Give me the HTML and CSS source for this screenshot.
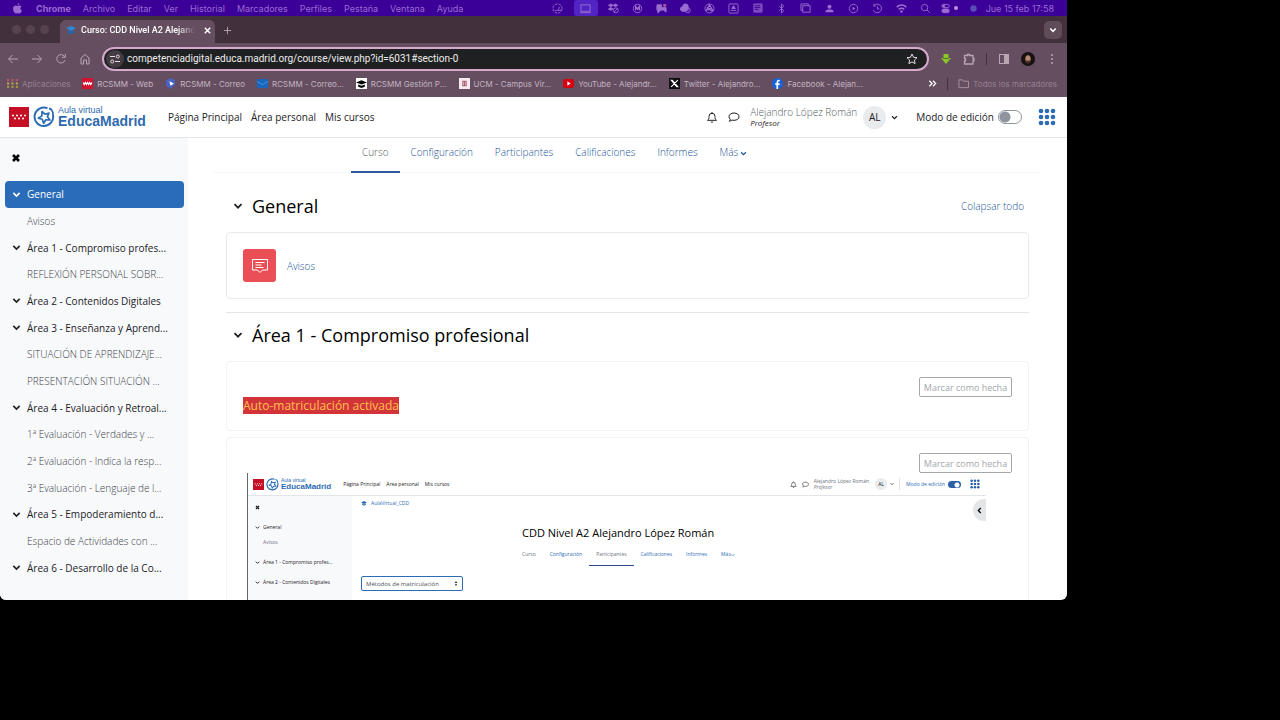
FILE: index.html
```html
<!DOCTYPE html>
<html lang="es">
<head>
    <meta charset="UTF-8">
    <meta name="viewport" content="width=device-width, initial-scale=1.0">
    <title>Curso: CDD Nivel A2 Alejandro López Román</title>
    <link rel="stylesheet" href="styles.css">
</head>
<body>

<!-- Shared icons -->
<svg class="sprite" aria-hidden="true">
    <symbol id="chevron" viewBox="0 0 10 10"><path d="M1.5 3.2 5 6.7 8.5 3.2" fill="none" stroke="currentColor" stroke-width="1.8"/></symbol>
    <symbol id="cross" viewBox="0 0 10 10"><path d="M2 2 8 8M8 2 2 8" fill="none" stroke="currentColor" stroke-width="2.6"/></symbol>
    <symbol id="bell" viewBox="0 0 12 12"><path d="M1.5 9.3c1.3-1 1.5-2 1.5-4a3 3 0 0 1 6 0c0 2 .2 3 1.500 4zM6 1v1.300M4.800 10.500a1.300 1 0 0 0 2.400 0" fill="none" stroke="currentColor"/></symbol>
    <symbol id="chat" viewBox="0 0 12 12"><path d="M6 2c3 0 5 1.500 5 3.700S9 9.300 6 9.300c-.8 0-1.400-.1-2-.3-.8.7-1.600 1.100-2.700 1.200.6-.7.9-1.300 1-2C1.400 7.500 1 6.700 1 5.700 1 3.500 3 2 6 2z" fill="none" stroke="currentColor"/></symbol>
    <symbol id="grid" viewBox="0 0 18 18"><g fill="currentColor"><circle cx="3" cy="3" r="2.300"/><circle cx="9" cy="3" r="2.300"/><circle cx="15" cy="3" r="2.300"/><circle cx="3" cy="9" r="2.300"/><circle cx="9" cy="9" r="2.300"/><circle cx="15" cy="9" r="2.300"/><circle cx="3" cy="15" r="2.300"/><circle cx="9" cy="15" r="2.300"/><circle cx="15" cy="15" r="2.300"/></g></symbol>
    <symbol id="flag" viewBox="0 0 20 20"><rect width="20" height="20" fill="#c40f24"/><g fill="#fff"><circle cx="4" cy="8.500" r="1"/><circle cx="8" cy="8.500" r="1"/><circle cx="12" cy="8.500" r="1"/><circle cx="16" cy="8.500" r="1"/><circle cx="6" cy="11.500" r="1"/><circle cx="10" cy="11.500" r="1"/><circle cx="14" cy="11.500" r="1"/></g></symbol>
    <symbol id="educa" viewBox="0 0 22 22"><g fill="none" stroke="#2b6cb5"><path d="M14.500 2.200A9.300 9.300 0 1 0 20 9" stroke-width="2"/><path d="m9 5.500 3 2.700 4-1.200-1.600 3.800 2.600 3.200-4.200-.2-2.200 3.500-1.300-4-4-1 3.500-2.400z" stroke-width="1.700" stroke-linejoin="round"/><path d="M16 2.500c2.500.5 4.500 3 3.800 6.500" stroke-width="1.800"/></g></symbol>
</svg>

<div class="screen">

    <!-- System menu bar -->
    <div class="menubar">
        <svg class="apple" viewBox="0 0 12 12"><path d="M8.200 0c.1 1.200-.9 2.400-2.100 2.400C6 1.200 7 .2 8.200 0zM6.200 3.200c.6 0 1.200-.5 2.100-.5.8 0 1.600.4 2.100 1.100-1.900 1.100-1.500 3.700.4 4.400C10.200 10 9.200 11.500 8.200 11.500c-.8 0-1-.4-1.900-.4s-1.200.4-1.900.4C2.900 11.500 1.200 8.600 1.200 6.300c0-2.200 1.400-3.500 2.800-3.500.9 0 1.600.4 2.200.4z" fill="currentColor"/></svg>
        <nav class="menus" aria-label="Menú">
            <b>Chrome</b><span>Archivo</span><span>Editar</span><span>Ver</span><span>Historial</span><span>Marcadores</span><span>Perfiles</span><span>Pestaña</span><span>Ventana</span><span>Ayuda</span>
        </nav>
        <div class="status">
            <span><svg viewBox="0 0 12 12"><circle cx="6" cy="6" r="5" stroke-dasharray="3 1"/><path d="M3 8c3 1 5-1 5-4M6 8h4"/></svg></span>
            <span class="on"><svg viewBox="0 0 12 12"><rect x="1" y="2" width="10" height="7"/><path d="M0 10.500h12"/></svg></span>
            <span><svg viewBox="0 0 12 12"><path d="m3 1 2.500 1.500L3 4 .5 2.500zM8 1l2.500 1.500L8 4 5.500 2.500zM3 5l2.500 1.500L3 8 .5 6.500z" fill="currentColor"/><circle cx="8.500" cy="8" r="2.700"/><path d="m6.500 10 4-4"/></svg></span>
            <span><svg viewBox="0 0 12 12"><circle cx="6" cy="6" r="4.600"/><path d="M4 8V4l2 2.500L8 4v4" stroke-width="1.600"/></svg></span>
            <span><svg viewBox="0 0 12 12"><path d="M1 2h5v3h5v5L8 7.500 5 8l-3 3V8H1z" fill="currentColor"/><circle cx="9.500" cy="2.500" r="1.800" fill="#b04d96" stroke="none"/></svg></span>
            <span><svg viewBox="0 0 12 12"><path d="M1 8a2.500 2.500 0 0 1 2-4 3 3 0 0 1 6 0v2L6 9H2z" fill="currentColor"/><circle cx="8.500" cy="8" r="2.700"/><path d="m7.500 7 2 2m0-2-2 2"/></svg></span>
            <span><svg viewBox="0 0 12 12"><circle cx="6" cy="6" r="4.900"/><path d="M2 9 6 2l4 7M4 8l4-3M3 5l6 4" stroke-width="1.400"/></svg></span>
            <span><svg viewBox="0 0 12 12"><rect x="1" y="1" width="10" height="10" rx="1"/><path d="m6 3 2 3H4zM3 8h6" fill="currentColor"/></svg></span>
            <span><svg viewBox="0 0 12 12"><path d="M2 1h9v9H2z" fill="currentColor" opacity=".7"/><path d="M3 3h6M3 5h6M3 7h4" stroke="#3a0098"/></svg></span>
            <span><svg viewBox="0 0 12 12"><path d="m3.500 3.500 5 5L6 11V1l2.500 2.500-5 5"/></svg></span>
            <span><svg viewBox="0 0 12 12"><path d="M3 8H1V1h8v2"/><rect x="3" y="3" width="8" height="7"/></svg></span>
            <span><svg viewBox="0 0 12 12"><circle cx="6" cy="4" r="2.200" fill="currentColor" stroke="none"/><path d="M1.500 10c0-2.500 2-3 4.500-3s4.500.5 4.500 3z" fill="currentColor" stroke="none"/></svg></span>
            <span><svg viewBox="0 0 12 12"><circle cx="6" cy="6" r="4.600"/><path d="m5 4 3 2-3 2z" fill="currentColor" stroke="none"/></svg></span>
            <span><svg viewBox="0 0 12 12"><path d="M2 3a4.700 4.700 0 1 1-.5 5M2 1v2.500h2M6 3.500V6.500h2"/></svg></span>
            <span><svg viewBox="0 0 12 12"><path d="M.8 4.500c3-3 7.400-3 10.400 0M3 7c2-1.700 4-1.700 6 0" stroke-width="1.600"/><circle cx="6" cy="9.300" r="1.300" fill="currentColor" stroke="none"/></svg></span>
            <span><svg viewBox="0 0 12 12"><circle cx="5" cy="5" r="3.500"/><path d="m7.500 7.500 3 3"/></svg></span>
            <span><svg viewBox="0 0 12 12"><rect x="1" y="1.500" width="8" height="3.500" rx="1.700"/><circle cx="3" cy="3.200" r="1.200" fill="currentColor"/><rect x="1" y="6.500" width="8" height="4" rx="2" fill="currentColor"/></svg><i></i></span>
            <span><svg viewBox="0 0 12 12"><circle cx="6" cy="6" r="3.500" fill="#5a4dba" stroke="none"/></svg></span>
        </div>
        <time>Jue 15 feb 17:58</time>
    </div>

    <!-- Browser window -->
    <div class="tabstrip">
        <div class="lights"><i></i><i></i><i></i></div>
        <div class="tab">
            <svg class="favicon" viewBox="0 0 10 10"><path d="M0 3 5 1l5 2-5 3z" fill="#2f86d6"/><path d="M2 5v3c2 1 4 1 6 0V5L5 6.500z" fill="#1f68b4"/></svg>
            <span class="tab-title">Curso: CDD Nivel A2 Alejand</span>
            <button aria-label="Cerrar pestaña"><svg viewBox="0 0 10 10"><path d="m2 2 6 6M8 2 2 8" fill="none" stroke="#fff" stroke-width="1.600"/></svg></button>
        </div>
        <button class="new-tab" aria-label="Nueva pestaña"><svg viewBox="0 0 10 10"><path d="M5 1v8M1 5h8" fill="none" stroke="currentColor"/></svg></button>
        <button class="tab-search" aria-label="Buscar pestañas"><svg><use href="#chevron"/></svg></button>
    </div>

    <div class="toolbar">
        <div class="nav-buttons">
            <button aria-label="Atrás"><svg viewBox="0 0 12 12"><path d="M11 6H2M5.500 2 1.500 6l4 4"/></svg></button>
            <button aria-label="Adelante"><svg viewBox="0 0 12 12"><path d="M1 6h9M6.500 2l4 4-4 4"/></svg></button>
            <button aria-label="Recargar"><svg viewBox="0 0 12 12"><path d="M9.500 3.500A4.200 4.200 0 1 0 10 7M10.300 1v3.300H7"/></svg></button>
            <button aria-label="Inicio"><svg viewBox="0 0 12 12"><path d="M2 11V5l4-3.500L10 5v6H7.500V7h-3v4z"/></svg></button>
        </div>
        <div class="omnibox">
            <span class="site-info"><svg viewBox="0 0 12 12"><path d="M1 3.500h5M6 8.500h5"/><circle cx="8.800" cy="3.500" r="1.500"/><circle cx="3.200" cy="8.500" r="1.500"/></svg></span>
            <input type="text" aria-label="Dirección" value="competenciadigital.educa.madrid.org/course/view.php?id=6031#section-0">
            <button aria-label="Añadir a marcadores"><svg viewBox="0 0 12 12"><path d="m6 1 1.500 3.300 3.500.4-2.600 2.400.7 3.500L6 8.900l-3.100 1.700.7-3.500L1 4.700l3.500-.4z"/></svg></button>
        </div>
        <div class="extensions">
            <svg viewBox="0 0 12 12"><path d="M3.500 1h5v4H11L6 11 1 5h2.500z" fill="#8fc62b" stroke="none"/><path d="M3 5.500h6" stroke="#4e7a26"/></svg>
            <svg viewBox="0 0 12 12"><path d="M1.500 2.500H4.500V1.500h2v1H10V5.500h1v2h-1V11H1.500V8h1V5.500h-1z" stroke-width="1.300"/></svg>
            <i class="sep"></i>
            <svg viewBox="0 0 12 12"><rect x="1.500" y="1.500" width="9" height="9"/><path d="M6.500 1.500h4v9h-4z" fill="currentColor"/></svg>
            <svg class="avatar" viewBox="0 0 14 14"><circle cx="7" cy="7" r="7" fill="#171113" stroke="none"/><ellipse cx="7" cy="7" rx="2.700" ry="3.700" fill="#b7896f" stroke="none"/><path d="M4.500 8c1 1 4 1 5 0v2c-1 2-4 2-5 0z" fill="#4a2e27" stroke="none"/></svg>
            <svg viewBox="0 0 12 12"><g fill="currentColor" stroke="none"><circle cx="6" cy="2" r="1"/><circle cx="6" cy="6" r="1"/><circle cx="6" cy="10" r="1"/></g></svg>
        </div>
    </div>

    <div class="bookmarks">
        <nav class="bookmark-list" aria-label="Marcadores">
            <a href="#" class="dim"><svg viewBox="0 0 10 10"><path d="M0 1h2v2H0zM4 1h2v2H4zM8 1h2v2H8z" fill="#b3566a"/><path d="M0 4h2v2H0zM4 4h2v2H4zM8 4h2v2H8z" fill="#b9a94e"/><path d="M0 7h2v2H0zM4 7h2v2H4zM8 7h2v2H8z" fill="#a0933c"/></svg>Aplicaciones</a>
            <a href="#"><svg viewBox="0 0 10 10"><rect width="10" height="10" fill="#d3122f"/><path d="m1 4 1 2 1-2 1 2 1-2 1 2 1-2 1 2 1-2" fill="none" stroke="#fff"/></svg>RCSMM - Web</a>
            <a href="#"><svg viewBox="0 0 10 10"><path d="m5 0 4 2v4L5 10 1 7V2z" fill="#4964c4"/><path d="m4 3 4 2-3 2z" fill="#fff"/></svg>RCSMM - Correo</a>
            <a href="#"><svg viewBox="0 0 10 10"><rect y="1" width="10" height="8" rx="1" fill="#1767bd"/><path d="m0 3 5 3 5-3" fill="none" stroke="#388bdb"/></svg>RCSMM - Correo...</a>
            <a href="#"><svg viewBox="0 0 10 10"><rect width="10" height="10" fill="#fff"/><path d="m0 4 5-2 5 2-5 2zM2 6l3 1 3-1v2L5 9 2 8z"/></svg>RCSMM Gestión P...</a>
            <a href="#"><svg viewBox="0 0 10 10"><rect width="10" height="10" fill="#f7e9ee"/><path d="M3.500 3h3v4h-3zM5 3v4" fill="none" stroke="#a65e73"/></svg>UCM - Campus Vir...</a>
            <a href="#"><svg viewBox="0 0 10 10"><rect y="1" width="10" height="8" rx="2" fill="#d70012"/><path d="m4 3 3 2-3 2z" fill="#fff"/></svg>YouTube - Alejandr...</a>
            <a href="#"><svg viewBox="0 0 10 10"><rect width="10" height="10" fill="#0d0c0f"/><path d="m2 2 5 6h1L3 2zM8 2 2 8" fill="none" stroke="#fff"/></svg>Twitter - Alejandro...</a>
            <a href="#"><svg viewBox="0 0 10 10"><circle cx="5" cy="5" r="5" fill="#1763da"/><path d="M7 2.500C5 2 4.800 3.500 4.800 4.500V10M3 5.500h4" fill="none" stroke="#fff" stroke-width="1.500"/></svg>Facebook - Alejan...</a>
        </nav>
        <button class="more" aria-label="Más marcadores"><svg viewBox="0 0 10 10"><path d="m1.500 2 3 3-3 3M5.500 2l3 3-3 3" fill="none" stroke="#fff" stroke-width="1.400"/></svg></button>
        <i class="sep"></i>
        <a href="#" class="dim all"><svg viewBox="0 0 12 12"><path d="M1 2h4l1 1.500h5.500v7H1z" fill="none" stroke="#a897a5"/></svg>Todos los marcadores</a>
    </div>

    <!-- Virtual classroom -->
    <header class="site-header">
        <a href="#" class="brand" aria-label="EducaMadrid">
            <svg class="flag"><use href="#flag"/></svg>
            <svg class="educa"><use href="#educa"/></svg>
            <span class="brand-text"><small>Aula virtual</small><strong>EducaMadrid</strong></span>
        </a>
        <nav class="primary" aria-label="Principal">
            <a href="#">Página Principal</a>
            <a href="#">Área personal</a>
            <a href="#">Mis cursos</a>
        </nav>
        <div class="user">
            <svg class="icon"><use href="#bell"/></svg>
            <svg class="icon"><use href="#chat"/></svg>
            <div class="user-name"><span>Alejandro López Román</span><em>Profesor</em></div>
            <span class="initials">AL</span>
            <svg class="caret"><use href="#chevron"/></svg>
            <label class="edit-mode">Modo de edición <input type="checkbox"></label>
            <svg class="apps"><use href="#grid"/></svg>
        </div>
    </header>

    <div class="page">
        <aside class="drawer">
            <button class="close" aria-label="Cerrar índice"><svg><use href="#cross"/></svg></button>
            <ul class="index">
                <li class="section active"><svg><use href="#chevron"/></svg><a href="#">General</a></li>
                <li><a href="#">Avisos</a></li>
                <li class="section"><svg><use href="#chevron"/></svg><a href="#">Área 1 - Compromiso profes...</a></li>
                <li><a href="#">REFLEXIÓN PERSONAL SOBR...</a></li>
                <li class="section"><svg><use href="#chevron"/></svg><a href="#">Área 2 - Contenidos Digitales</a></li>
                <li class="section"><svg><use href="#chevron"/></svg><a href="#">Área 3 - Enseñanza y Aprend...</a></li>
                <li><a href="#">SITUACIÓN DE APRENDIZAJE...</a></li>
                <li><a href="#">PRESENTACIÓN SITUACIÓN ...</a></li>
                <li class="section"><svg><use href="#chevron"/></svg><a href="#">Área 4 - Evaluación y Retroal...</a></li>
                <li><a href="#">1ª Evaluación - Verdades y ...</a></li>
                <li><a href="#">2ª Evaluación - Indica la resp...</a></li>
                <li><a href="#">3ª Evaluación - Lenguaje de l...</a></li>
                <li class="section"><svg><use href="#chevron"/></svg><a href="#">Área 5 - Empoderamiento d...</a></li>
                <li><a href="#">Espacio de Actividades con ...</a></li>
                <li class="section"><svg><use href="#chevron"/></svg><a href="#">Área 6 - Desarrollo de la Co...</a></li>
            </ul>
        </aside>

        <main>
            <nav class="secondary" aria-label="Curso">
                <a href="#" class="current">Curso</a>
                <a href="#">Configuración</a>
                <a href="#">Participantes</a>
                <a href="#">Calificaciones</a>
                <a href="#">Informes</a>
                <a href="#">Más <svg><use href="#chevron"/></svg></a>
            </nav>

            <section class="course-section">
                <div class="section-head">
                    <svg><use href="#chevron"/></svg>
                    <h2>General</h2>
                    <a href="#">Colapsar todo</a>
                </div>
                <div class="card forum">
                    <span class="activity-icon"><svg viewBox="0 0 18 18"><path d="M1.500 2.500h15v10.500h-5L9 15.500 6.500 13h-5z"/><path d="M4.500 5.500h9M4.500 8h6M4.500 10.500h8"/></svg></span>
                    <a href="#">Avisos</a>
                </div>
            </section>

            <section class="course-section">
                <div class="section-head">
                    <svg><use href="#chevron"/></svg>
                    <h2>Área 1 - Compromiso profesional</h2>
                </div>
                <div class="card notice">
                    <button class="done">Marcar como hecha</button>
                    <p><mark>Auto-matriculación activada</mark></p>
                </div>
                <div class="card tutorial">
                    <button class="done">Marcar como hecha</button>

                    <div class="capture">
                        <div class="cap-header">
                            <svg class="cap-flag"><use href="#flag"/></svg>
                            <svg class="cap-educa"><use href="#educa"/></svg>
                            <span class="cap-brand"><small>Aula virtual</small><strong>EducaMadrid</strong></span>
                            <span class="cap-primary"><span>Página Principal</span><span>Área personal</span><span>Mis cursos</span></span>
                            <span class="cap-user">
                                <svg><use href="#bell"/></svg>
                                <svg><use href="#chat"/></svg>
                                <span class="cap-name"><span>Alejandro López Román</span><em>Profesor</em></span>
                                <span class="cap-initials">AL</span>
                                <svg class="cap-caret"><use href="#chevron"/></svg>
                                <label class="cap-edit">Modo de edición <input type="checkbox" checked></label>
                                <svg class="cap-apps"><use href="#grid"/></svg>
                            </span>
                        </div>
                        <div class="cap-page">
                            <div class="cap-drawer">
                                <svg class="cap-close"><use href="#cross"/></svg>
                                <span><svg><use href="#chevron"/></svg>General</span>
                                <span class="sub">Avisos</span>
                                <span><svg><use href="#chevron"/></svg>Área 1 - Compromiso profes...</span>
                                <span><svg><use href="#chevron"/></svg>Área 2 - Contenidos Digitales</span>
                            </div>
                            <div class="cap-main">
                                <div class="cap-crumb"><svg viewBox="0 0 10 10"><path d="m0 4 5-2.500L10 4 5 6.500zM2 6v2l3 1.500L8 8V6L5 7.500z" fill="currentColor"/></svg>AulaVirtual_CDD</div>
                                <h3>CDD Nivel A2 Alejandro López Román</h3>
                                <div class="cap-tabs">
                                    <span class="gray">Curso</span><span>Configuración</span><span class="gray current">Participantes</span><span>Calificaciones</span><span>Informes</span><span>Más<svg><use href="#chevron"/></svg></span>
                                </div>
                                <div class="cap-select">
                                    <select aria-label="Matriculación"><option>Métodos de matriculación</option></select>
                                    <svg viewBox="0 0 6 8"><path d="M1 3 3 0l2 3zM1 5l2 3 2-3z" fill="currentColor"/></svg>
                                </div>
                            </div>
                            <span class="cap-toggle"><svg><use href="#chevron"/></svg></span>
                        </div>
                    </div>
                </div>
            </section>
        </main>
    </div>
</div>

</body>
</html>
```

FILE: styles.css
```css
* {
    box-sizing: border-box;
}

body {
    margin: 0;
    padding: 0 213px 120px 0;
    height: 100vh;
    background-color: #000;
    font-family: "Open Sans", sans-serif;
    font-size: 10px;
    color: #1d2125;
    overflow: hidden;
}

a {
    color: #2f6bad;
    text-decoration: none;
}

a:hover {
    text-decoration: underline;
}

button {
    padding: 0;
    border: none;
    background: none;
    font-family: inherit;
    color: inherit;
    cursor: pointer;
}

svg {
    display: block;
    flex: none;
}

.sprite {
    position: absolute;
    width: 0;
    height: 0;
}

.screen {
    display: flex;
    flex-direction: column;
    height: 100%;
    background-color: #fff;
    border-radius: 0 0 6px 6px;
    overflow: hidden;
}

/* System menu bar */
.menubar {
    display: flex;
    align-items: center;
    flex: none;
    height: 16px;
    padding: 0 13px 0 12px;
    background-color: #3a0098;
    color: #9a6bd0;
    font-family: Inter, sans-serif;
    font-size: 9px;
    white-space: nowrap;
}

.apple {
    width: 11px;
    height: 11px;
    margin-right: 13px;
}

.menus {
    display: flex;
    gap: 12px;
}

.status {
    display: flex;
    margin-left: auto;
}

.status span {
    display: flex;
    align-items: center;
    justify-content: center;
    width: 24px;
    height: 16px;
}

.status .on {
    margin: 0 4px;
    border-radius: 3px;
    background-color: #5125c4;
}

.status svg {
    width: 11px;
    height: 11px;
    fill: none;
    stroke: currentColor;
}

.status i {
    width: 4px;
    height: 4px;
    margin-left: 2px;
    border-radius: 50%;
    background-color: #b995d9;
}

/* Browser tabs */
.tabstrip {
    display: flex;
    align-items: flex-end;
    flex: none;
    height: 27px;
    background-color: #43303d;
    font-family: Roboto, sans-serif;
}

.lights {
    display: flex;
    gap: 5px;
    width: 60px;
    padding: 0 0 9px 12px;
}

.lights i {
    width: 9px;
    height: 9px;
    border-radius: 50%;
    background-color: #57434f;
}

.tab {
    display: flex;
    align-items: center;
    width: 155px;
    height: 23px;
    padding: 0 6px 3px;
    border-radius: 6px 6px 0 0;
    background-color: #654e60;
    color: #fff;
    font-size: 9px;
    font-weight: 500;
}

.favicon {
    width: 10px;
    height: 10px;
    margin-right: 5px;
}

.tab-title {
    flex: 1;
    white-space: nowrap;
    -webkit-mask-image: linear-gradient(to right, #000 85%, transparent);
    mask-image: linear-gradient(to right, #000 85%, transparent);
}

.tab button svg {
    width: 9px;
    height: 9px;
    margin-left: 8px;
}

.new-tab {
    align-self: center;
    margin: 2px 0 0 8px;
    color: #b7a5b2;
}

.new-tab svg {
    width: 9px;
    height: 9px;
}

.tab-search {
    display: flex;
    align-items: center;
    justify-content: center;
    align-self: center;
    width: 18px;
    height: 18px;
    margin: 0 5px 0 auto;
    border-radius: 5px;
    background-color: #5f4b5a;
    color: #fff;
}

.tab-search svg {
    width: 8px;
    height: 8px;
}

/* Address bar */
.toolbar {
    display: flex;
    align-items: center;
    flex: none;
    height: 31px;
    padding: 0 9px 0 7px;
    background-color: #654e60;
    color: #b7a5b2;
}

.toolbar svg {
    width: 12px;
    height: 12px;
    fill: none;
    stroke: currentColor;
}

.nav-buttons {
    display: flex;
    gap: 12px;
    width: 95px;
}

.omnibox {
    display: flex;
    align-items: center;
    flex: 1;
    height: 24px;
    padding: 0 9px 0 2px;
    border: 2px solid #d5a8cc;
    border-radius: 12px;
    background-color: #1f2021;
    color: #e6dde4;
}

.site-info {
    padding: 3px;
    border-radius: 50%;
    background-color: #443b43;
}

.omnibox input {
    flex: 1;
    height: 18px;
    margin-left: 3px;
    padding: 0;
    border: none;
    outline: none;
    background: none;
    color: #eee;
    font-family: Roboto, sans-serif;
    font-size: 10px;
}

.extensions {
    display: flex;
    align-items: center;
    gap: 11px;
    margin-left: 11px;
}

.extensions .avatar {
    width: 14px;
    height: 14px;
}

.sep {
    width: 1px;
    height: 12px;
    background-color: #47313f;
}

/* Bookmarks bar */
.bookmarks {
    display: flex;
    align-items: center;
    flex: none;
    height: 23px;
    padding: 0 10px 4px 7px;
    background-color: #654e60;
    font-family: Inter, sans-serif;
    font-size: 8px;
    white-space: nowrap;
}

.bookmark-list {
    display: flex;
    gap: 12px;
    flex: 1;
}

.bookmarks a {
    display: flex;
    align-items: center;
    gap: 4px;
    color: #c3b4c0;
}

.bookmarks a svg {
    width: 11px;
    height: 11px;
}

.bookmarks .dim {
    color: #95808f;
}

.more {
    margin-right: 10px;
}

.more svg {
    width: 9px;
    height: 9px;
}

.all {
    margin-left: 10px;
}

/* Site header */
.site-header {
    display: flex;
    align-items: center;
    flex: none;
    height: 41px;
    padding: 0 11px 0 9px;
    border-bottom: 1px solid #e3e5e8;
    white-space: nowrap;
}

.brand {
    display: flex;
    align-items: center;
    font-family: "Liberation Sans", Arial, sans-serif;
}

.flag {
    width: 20px;
    height: 20px;
}

.educa {
    width: 22px;
    height: 22px;
    margin: 0 3px 0 4px;
}

.brand-text small,
.brand-text strong {
    display: block;
}

.brand-text small {
    font-size: 9px;
    line-height: 9px;
}

.brand-text strong {
    font-size: 14px;
    line-height: 13px;
}

.primary {
    display: flex;
    gap: 9px;
    margin-left: 22px;
}

.primary a {
    color: #1d2125;
}

.user {
    display: flex;
    align-items: center;
    margin-left: auto;
}

.icon {
    width: 12px;
    height: 12px;
    margin-right: 10px;
}

.user-name {
    color: #555c63;
    font-weight: 300;
}

.user-name span,
.user-name em {
    display: block;
    line-height: 11px;
}

.user-name em {
    color: #1d2125;
    font-size: 8px;
    font-weight: 400;
    line-height: 9px;
}

.initials {
    width: 23px;
    height: 23px;
    margin: 0 5px 0 6px;
    border-radius: 50%;
    background-color: #e9ebed;
    line-height: 23px;
    text-align: center;
}

.caret {
    width: 7px;
    height: 7px;
}

.edit-mode {
    display: flex;
    align-items: center;
    margin-left: 18px;
}

.edit-mode input {
    appearance: none;
    width: 24px;
    height: 14px;
    margin: 0 16px 0 4px;
    border: 1px solid #8f959e;
    border-radius: 7px;
    background: radial-gradient(circle at 6px 6px, #8f959e 5px, transparent 6px);
}

.apps {
    width: 18px;
    height: 18px;
    color: #2b6cb5;
}

/* Course index */
.page {
    display: flex;
    flex: 1;
    min-height: 0;
}

.drawer {
    flex: none;
    width: 188px;
    padding: 15px 4px 0 5px;
    background-color: #f8f9fb;
}

.close {
    display: block;
    margin: 0 0 18px 6px;
    color: #000;
}

.close svg {
    width: 10px;
    height: 10px;
}

.index {
    display: grid;
    grid-auto-rows: 1fr;
    height: 400px;
    margin: 0;
    padding: 0;
    list-style: none;
    white-space: nowrap;
}

.index li {
    display: flex;
    align-items: center;
    padding-left: 22px;
    border-radius: 4px;
}

.index a {
    color: #3d4349;
    font-weight: 300;
}

.index .section {
    padding-left: 7px;
}

.index .section a {
    color: #1d2125;
    font-weight: 400;
}

.index .section svg {
    width: 9px;
    height: 9px;
    margin-right: 6px;
}

.index .active,
.index .active a {
    background-color: #2b6cb8;
    color: #fff;
}

/* Course content */
main {
    flex: 1;
    min-width: 0;
    padding: 0 38px;
    overflow: hidden;
}

main a {
    color: #1c5599;
    font-weight: 300;
}

.secondary {
    display: flex;
    height: 35px;
    margin: 0 -12px;
    padding-left: 137px;
    border-bottom: 1px solid #f4f5f6;
}

.secondary a {
    display: flex;
    gap: 2px;
    height: 35px;
    padding: 0 11px;
    line-height: 29px;
}

.secondary a svg {
    width: 7px;
    height: 7px;
    margin-top: 12px;
}

.secondary .current {
    border-bottom: 2px solid #2c5aa0;
    color: #555c63;
}

.course-section {
    padding-top: 20px;
}

.course-section + .course-section {
    margin-top: 13px;
    padding-top: 9px;
    border-top: 1px solid #e3e5e8;
}

.section-head {
    display: flex;
    align-items: center;
    height: 26px;
    margin-bottom: 13px;
    padding: 0 5px 0 7px;
}

.section-head svg {
    width: 10px;
    height: 10px;
    margin-right: 9px;
}

.section-head h2 {
    flex: 1;
    margin: 0;
    color: #000;
    font-size: 18px;
    font-weight: 400;
    line-height: 26px;
}

.card {
    padding: 15px 16px;
    border: 1px solid #e8eaec;
    border-radius: 4px;
}

.forum {
    display: flex;
    align-items: center;
    gap: 11px;
    height: 67px;
}

.activity-icon {
    display: flex;
    align-items: center;
    justify-content: center;
    width: 33px;
    height: 33px;
    border-radius: 3px;
    background-color: #e94f55;
}

.activity-icon svg {
    width: 18px;
    height: 18px;
    fill: none;
    stroke: #fff;
}

.done {
    display: block;
    width: 93px;
    height: 20px;
    margin-left: auto;
    border: 1px solid #a3a8ad;
    border-radius: 2px;
    color: #a3a8ad;
    font-size: 9px;
    white-space: nowrap;
}

.notice {
    height: 70px;
    margin-bottom: 6px;
    border-color: #f2f3f4;
}

.notice p {
    margin: 0;
    font-size: 12px;
    line-height: 18px;
}

.notice mark {
    background-color: #d3343a;
    color: #ffc14d;
}

.tutorial {
    height: 400px;
    border-color: #f2f3f4;
}

/* Screen capture shown inside the activity */
.capture {
    margin: 0 26px 0 4px;
    border-left: 1px solid #666;
    font-size: 5px;
    white-space: nowrap;
}

.cap-header {
    display: flex;
    align-items: center;
    height: 23px;
    padding: 0 6px 0 5px;
    border-bottom: 1px solid #e3e5e8;
}

.cap-flag {
    width: 11px;
    height: 11px;
}

.cap-educa {
    width: 13px;
    height: 13px;
    margin: 0 2px;
}

.cap-brand {
    color: #2b6cb5;
    font-family: "Liberation Sans", Arial, sans-serif;
}

.cap-brand small,
.cap-brand strong {
    display: block;
}

.cap-brand small {
    font-size: 5px;
    line-height: 5px;
}

.cap-brand strong {
    font-size: 8px;
    line-height: 7px;
}

.cap-primary {
    display: flex;
    gap: 6px;
    margin-left: 12px;
}

.cap-user {
    display: flex;
    align-items: center;
    margin-left: auto;
}

.cap-user svg {
    width: 7px;
    height: 7px;
    margin-right: 5px;
}

.cap-name {
    color: #6a737b;
}

.cap-name span,
.cap-name em {
    display: block;
    line-height: 6px;
}

.cap-initials {
    width: 12px;
    margin: 0 3px 0 6px;
    border-radius: 50%;
    background-color: #e9ebed;
    line-height: 12px;
    text-align: center;
}

.cap-user .cap-caret {
    width: 4px;
    height: 4px;
}

.cap-edit {
    display: flex;
    align-items: center;
    padding-left: 6px;
    border-left: 1px solid #e3e5e8;
    color: #2b6cb5;
    line-height: 12px;
}

.cap-edit input {
    appearance: none;
    width: 13px;
    height: 7px;
    margin: 0 9px 0 3px;
    border-radius: 4px;
    background: radial-gradient(circle at 9px 4px, #fff 2px, #2b5fa8 3px);
}

.cap-user .cap-apps {
    width: 10px;
    height: 10px;
    margin: 0;
    color: #2b5fa8;
}

.cap-page {
    display: flex;
    height: 300px;
}

.cap-drawer {
    display: grid;
    grid-template-rows: 22px 18px 12px 28px 12px;
    align-items: center;
    align-content: start;
    flex: none;
    width: 104px;
    padding: 0 7px;
    background-color: #f8f9fb;
}

.cap-drawer span {
    display: flex;
    align-items: center;
}

.cap-drawer svg {
    width: 5px;
    height: 5px;
    margin-right: 3px;
}

.cap-drawer .sub {
    padding-left: 8px;
    color: #6a737b;
}

.cap-main {
    flex: 1;
    padding: 2px 0 0 9px;
}

.cap-crumb {
    display: flex;
    align-items: center;
    gap: 4px;
    height: 10px;
    color: #2b6cb5;
}

.cap-crumb svg {
    width: 6px;
    height: 6px;
}

.cap-main h3 {
    margin: 17px 0 8px 161px;
    color: #000;
    font-size: 11px;
    font-weight: 400;
    line-height: 16px;
}

.cap-tabs {
    display: flex;
    margin-left: 154px;
    color: #2b6cb5;
}

.cap-tabs span {
    display: flex;
    height: 17px;
    padding: 0 7px;
    line-height: 10px;
}

.cap-tabs .gray {
    color: #6a737b;
}

.cap-tabs .current {
    border-bottom: 1px solid #2c4a90;
}

.cap-tabs svg {
    width: 4px;
    height: 4px;
    margin-top: 4px;
}

.cap-select {
    position: relative;
    width: 102px;
    margin: 10px 0 0;
}

.cap-select select {
    appearance: none;
    display: block;
    width: 102px;
    height: 15px;
    padding: 0 4px;
    border: 1px solid #2b6cb5;
    border-radius: 2px;
    background-color: #fff;
    color: #495057;
    font-family: inherit;
    font-size: 6px;
}

.cap-select svg {
    position: absolute;
    top: 5px;
    right: 5px;
    width: 4px;
    height: 5px;
}

.cap-toggle {
    display: flex;
    align-items: center;
    width: 13px;
    height: 22px;
    margin-top: 3px;
    padding-left: 3px;
    border-radius: 11px 0 0 11px;
    background-color: #e4e5e7;
    color: #000;
}

.cap-toggle svg {
    width: 7px;
    height: 7px;
    transform: rotate(90deg);
}
```
